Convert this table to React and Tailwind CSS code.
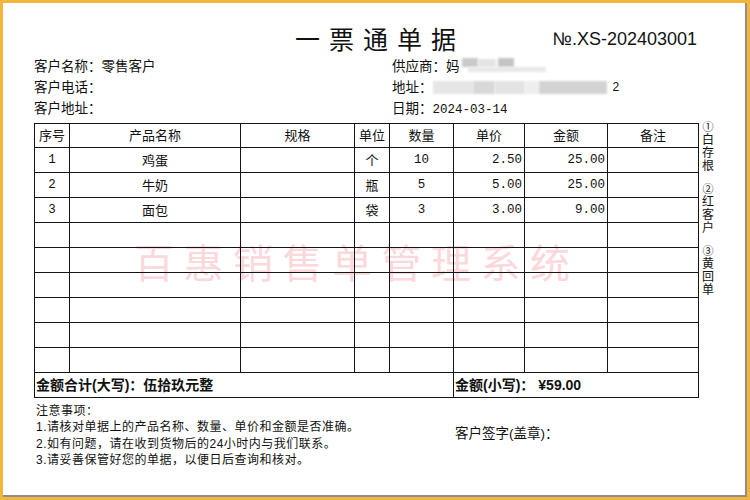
import React from 'react';

const rows = [
  { no: '1', name: '鸡蛋', unit: '个', qty: '10', price: '2.50', amount: '25.00' },
  { no: '2', name: '牛奶', unit: '瓶', qty: '5', price: '5.00', amount: '25.00' },
  { no: '3', name: '面包', unit: '袋', qty: '3', price: '3.00', amount: '9.00' },
  {}, {}, {}, {}, {}, {},
];

const cell = 'border-[1.5px] border-[#151515] p-0';
const mono = "font-['Liberation_Mono','Noto_Sans_CJK_SC',monospace] text-[12.5px]";

function SideLabel({ num, chars }) {
  return (
    <div className="flex flex-col items-center leading-[13px] text-[12px]">
      <span className="text-[11px]">{num}</span>
      {chars.split('').map((c, i) => (
        <span key={i}>{c}</span>
      ))}
    </div>
  );
}

export default function App() {
  return (
    <div className="w-[750px] h-[500px] bg-white border-[3px] border-[#f3b53c] shadow-[inset_-2px_-2px_0_#8f8f8f] relative overflow-hidden text-[#111] font-['Liberation_Sans','Noto_Sans_CJK_SC',sans-serif] pt-[17px] pl-[31px] pr-[31px]">
      {/* watermark */}
      <div className="absolute left-[131px] top-[233px] text-[40px] leading-[50px] tracking-[9.5px] text-[#fbd8db] font-['Noto_Sans_CJK_SC',sans-serif] pointer-events-none select-none">
        百惠销售单管理系统
      </div>

      {/* Title */}
      <div className="flex items-center h-[36px]">
        <div className="flex-1" />
        <div className="text-[25px] tracking-[9px] pl-[29px] font-normal font-['Noto_Sans_CJK_SC',serif] leading-[36px]">
          一票通单据
        </div>
        <div className="flex-1 flex justify-end pr-[19px] pt-[2px]">
          <span className="text-[18px] font-['Liberation_Sans',sans-serif]">№.XS-202403001</span>
        </div>
      </div>

      {/* Info */}
      <div className="grid grid-cols-[358px_1fr] text-[13.5px] leading-[21px]">
        <div>客户名称：零售客户</div>
        <div className="flex items-center">
          <span>供应商：</span>
          <span>妈</span>
          <span className="relative w-[90px] h-[21px]">
            <span className="absolute left-[2px] top-[2px] w-[16px] h-[9px] bg-[#c9c9c9] blur-[1px]" />
            <span className="absolute left-[18px] top-[3px] w-[18px] h-[8px] bg-[#e4e4e4] blur-[1px]" />
            <span className="absolute left-[38px] top-[2px] w-[16px] h-[9px] bg-[#c4c4c4] blur-[1px]" />
            <span className="absolute left-[8px] top-[11px] w-[78px] h-[5px] bg-[#e8e8e8] blur-[1px]" />
          </span>
        </div>
        <div>客户电话：</div>
        <div className="flex items-center">
          <span>地址：</span>
          <span className="relative w-[180px] h-[21px]">
            <span className="absolute left-[0px] top-[4px] w-[40px] h-[13px] bg-[#e6e6e6] blur-[1px]" />
            <span className="absolute left-[40px] top-[4px] w-[22px] h-[13px] bg-[#d8d8d8] blur-[1px]" />
            <span className="absolute left-[62px] top-[4px] w-[30px] h-[13px] bg-[#e3e3e3] blur-[1px]" />
            <span className="absolute left-[92px] top-[4px] w-[14px] h-[13px] bg-[#eeeeee] blur-[1px]" />
            <span className="absolute left-[106px] top-[4px] w-[68px] h-[13px] bg-[#d3d3d3] blur-[1px]" />
          </span>
          <span className="text-[12px]">2</span>
        </div>
        <div>客户地址：</div>
        <div>
          日期：<span className={mono}>2024-03-14</span>
        </div>
      </div>

      {/* Table + side labels */}
      <div className="flex mt-[2px]">
        <table className="relative border-collapse table-fixed w-[664px] text-[13px] leading-none">
          <colgroup>
            <col className="w-[35px]" />
            <col className="w-[171px]" />
            <col className="w-[114px]" />
            <col className="w-[35px]" />
            <col className="w-[64px]" />
            <col className="w-[71px]" />
            <col className="w-[83px]" />
            <col className="w-[91px]" />
          </colgroup>
          <thead>
            <tr className="h-[24px] text-center">
              <th className={`${cell} font-normal`}>序号</th>
              <th className={`${cell} font-normal`}>产品名称</th>
              <th className={`${cell} font-normal`}>规格</th>
              <th className={`${cell} font-normal`}>单位</th>
              <th className={`${cell} font-normal`}>数量</th>
              <th className={`${cell} font-normal`}>单价</th>
              <th className={`${cell} font-normal`}>金额</th>
              <th className={`${cell} font-normal`}>备注</th>
            </tr>
          </thead>
          <tbody>
            {rows.map((r, i) => (
              <tr key={i} className="h-[25px]">
                <td className={`${cell} text-center ${mono}`}>{r.no}</td>
                <td className={`${cell} text-center`}>{r.name}</td>
                <td className={cell}></td>
                <td className={`${cell} text-center`}>{r.unit}</td>
                <td className={`${cell} text-center ${mono}`}>{r.qty}</td>
                <td className={`${cell} text-right pr-[2px] ${mono}`}>{r.price}</td>
                <td className={`${cell} text-right pr-[2px] ${mono}`}>{r.amount}</td>
                <td className={cell}></td>
              </tr>
            ))}
            <tr className="h-[25px] font-bold text-[14px]">
              <td colSpan={5} className={`${cell} pl-[1px]`}>金额合计(大写)：伍拾玖元整</td>
              <td colSpan={3} className={`${cell} pl-[1px]`}>
                金额(小写)：<span className="ml-[4px]">¥59.00</span>
              </td>
            </tr>
          </tbody>
        </table>
        <div className="ml-[3px] flex flex-col gap-[10px] -mt-[2px]">
          <SideLabel num="①" chars="白存根" />
          <SideLabel num="②" chars="红客户" />
          <SideLabel num="③" chars="黄回单" />
        </div>
      </div>

      {/* Notes + signature */}
      <div className="flex mt-[5px] text-[12px] leading-[16.3px]">
        <div className="w-[421px] pl-[2px] tracking-[0.5px]">
          <div>注意事项：</div>
          <div>1.请核对单据上的产品名称、数量、单价和金额是否准确。</div>
          <div>2.如有问题，请在收到货物后的24小时内与我们联系。</div>
          <div>3.请妥善保管好您的单据，以便日后查询和核对。</div>
        </div>
        <div className="pt-[23px] text-[13.5px]">客户签字(盖章)：</div>
      </div>
    </div>
  );
}
